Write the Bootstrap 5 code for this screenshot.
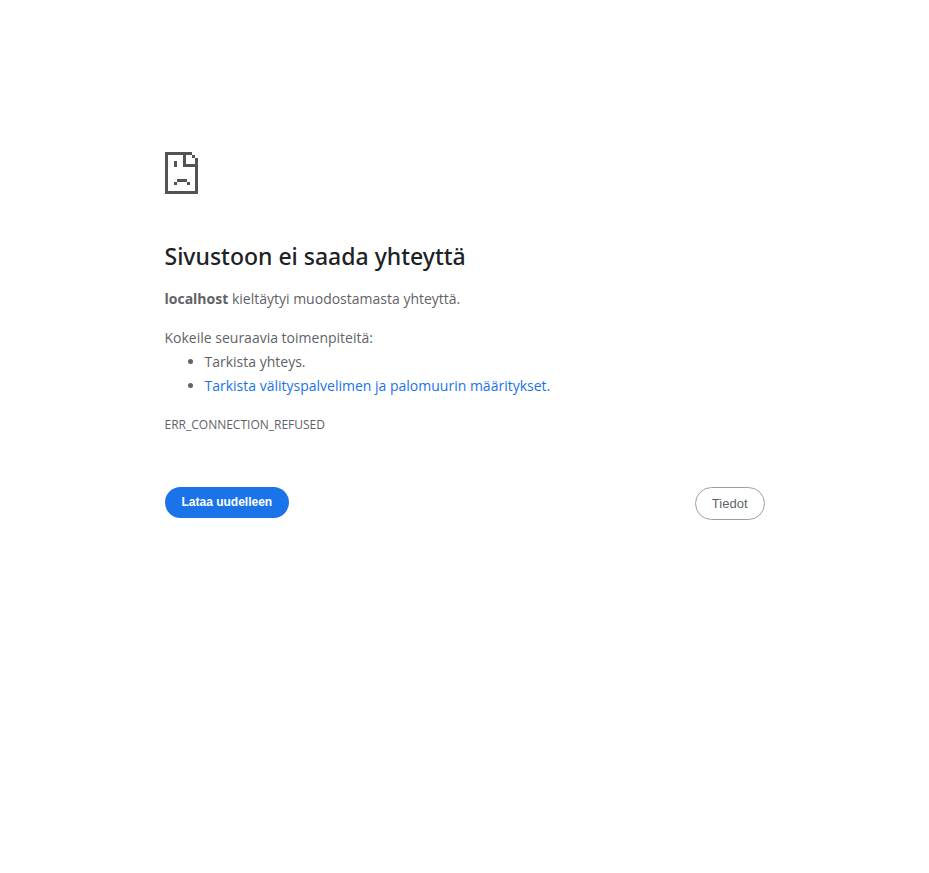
<!DOCTYPE html>
<html lang="fi">
<head>
<meta charset="utf-8">
<meta name="viewport" content="width=device-width, initial-scale=1">
<title>localhost</title>
<link rel="stylesheet" href="https://cdn.jsdelivr.net/npm/bootstrap@5.3.0/dist/css/bootstrap.min.css">
<style>
  body { font-family: "Segoe UI", "Open Sans", "Noto Sans", sans-serif; font-size: 14px; line-height: 24px; color: #5f6368; }
  .error-page { max-width: 600px; margin-top: 152px; }
  .error-page p { margin-bottom: 15px; }
  .error-icon { width: 33px; height: 42px; margin-bottom: 47px; }
  .error-title { font-family: "Segoe UI", "Noto Sans", sans-serif; font-size: 23px; line-height: 30px; font-weight: 500; color: #202124; }
  .error-list { padding-left: 40px; margin-bottom: 15px; }
  .error-list a { color: #1a73e8; }
  .error-code { font-size: 12px; line-height: 24px; }
  .error-actions { margin-top: 50px; }
  .error-actions .btn { font-family: Arial, "Liberation Sans", sans-serif; font-size: 13px; line-height: 15px; padding: 8px 16px; }
  .error-actions .btn-primary { --bs-btn-bg: #1a73e8; --bs-btn-hover-bg: #1765cc; border: 0; font-size: 12px; font-weight: 700; padding: 8px 17px; }
  .error-actions .btn-outline-secondary { --bs-btn-color: #5f6368; --bs-btn-border-color: #9aa0a6; }
</style>
</head>
<body>
<main class="container-fluid error-page p-0">
  <svg class="error-icon d-block" viewBox="0 0 33 42" shape-rendering="crispEdges" fill="#535353" aria-hidden="true">
    <path d="M0 0H27V3H21V12H30V6H33V42H0ZM3 3V39H30V15H18V3ZM27 3H30V6H27ZM9 9H12V15H9ZM12 27H22V30H12ZM9 30H12V33H9ZM22 30H25V33H22Z" fill-rule="evenodd"/>
  </svg>
  <h1 class="error-title mb-3">Sivustoon ei saada yhteyttä</h1>
  <p><strong>localhost</strong> kieltäytyi muodostamasta yhteyttä.</p>
  <div>Kokeile seuraavia toimenpiteitä:</div>
  <ul class="error-list">
    <li>Tarkista yhteys.</li>
    <li><a href="#" class="text-decoration-none">Tarkista välityspalvelimen ja palomuurin määritykset.</a></li>
  </ul>
  <div class="error-code">ERR_CONNECTION_REFUSED</div>
  <div class="error-actions d-flex justify-content-between align-items-start">
    <button type="button" class="btn btn-primary rounded-pill">Lataa uudelleen</button>
    <button type="button" class="btn btn-outline-secondary rounded-pill">Tiedot</button>
  </div>
</main>
<script src="https://cdn.jsdelivr.net/npm/bootstrap@5.3.0/dist/js/bootstrap.bundle.min.js"></script>
</body>
</html>
